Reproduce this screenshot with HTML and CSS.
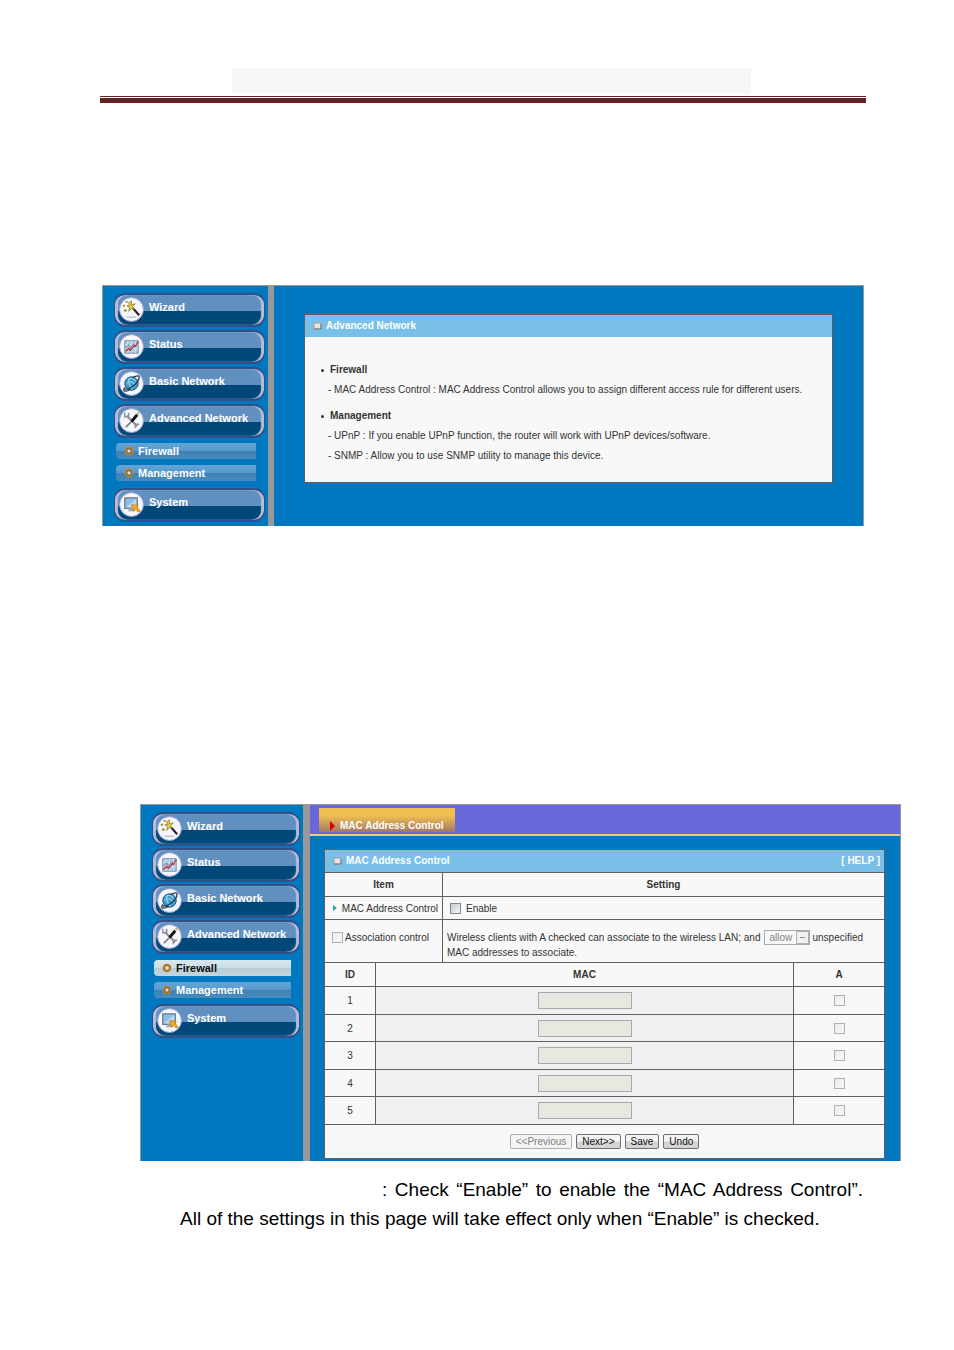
FILE: index.html
```html
<!DOCTYPE html>
<html lang="en">
<head>
  <meta charset="UTF-8">
  <title>MAC Address Control</title>
  <link rel="stylesheet" href="styles.css">
</head>
<body>

  <!-- icons shared by both menus -->
  <svg class="sprite" aria-hidden="true">
    <symbol id="wizard" viewBox="0 0 24 24">
      <path d="M7 20h10" stroke="#aaa" stroke-width="1"/>
      <path d="M12 9l8 9" stroke="#222" stroke-width="2.2"/>
      <path d="M12 9l2 2" stroke="#e8d870" stroke-width="2"/>
      <path d="M12 3l0 4 4-1-3 3 2 3-3-1-3 3 1-4-3-2 3 0-1-3z" fill="#e6cf3c" stroke="#6d5c16" stroke-width=".6"/>
      <path d="M3 7h2v2H3zM4 12h3v2H4zM6 3h2v2H6z" fill="#a8851a"/>
    </symbol>
    <symbol id="status" viewBox="0 0 24 24">
      <path d="M5 6h14v13H5z" fill="#a9cdea" stroke="#7186a0"/>
      <path d="M8 6v13M12 6v13M16 6v13M5 10h14M5 14h14" stroke="#d7e8f5" stroke-width=".7"/>
      <path d="M6 14l3-4 2 4 3-5 2 3" fill="none" stroke="#6d7c91"/>
      <path d="M6 17l3-3 2 2 4-5 1 1 3-5" fill="none" stroke="#c22f32" stroke-width="1.4"/>
    </symbol>
    <symbol id="basic" viewBox="0 0 24 24">
      <circle cx="12" cy="12" r="7" fill="#3f9ccc" stroke="#154f78"/>
      <path d="M8 8c3-3 7-1 8 2M7 12c3-3 7-2 9 2M10 6c-2 5 0 9 3 12" fill="none" stroke="#9bd8ec" stroke-width="1.1"/>
      <path d="M5 16c-3 5 1 5 6 2M19 8c3-5-1-5-6-2M5 17C7 20 17 14 20 7" fill="none" stroke="#26384c" stroke-width="1.3"/>
    </symbol>
    <symbol id="advanced" viewBox="0 0 24 24">
      <path d="M7 7l11 11" stroke="#8d9197" stroke-width="2.2"/>
      <path d="M5 4v4h4V4M16 20v-4h4" fill="none" stroke="#8d9197" stroke-width="1.6"/>
      <path d="M6 19l6-6" stroke="#777" stroke-width="1.6"/>
      <path d="M12 13l6-7" stroke="#151515" stroke-width="3"/>
      <path d="M18 5l2-1" stroke="#d6a32c" stroke-width="2"/>
    </symbol>
    <symbol id="system" viewBox="0 0 24 24">
      <path d="M5 5h13v11H5z" fill="#8dbce6" stroke="#69758b" stroke-width="1.3"/>
      <path d="M6 15L17 6v9z" fill="#b9d8f2"/>
      <path d="M8 19h8l-1-3h-5z" fill="#a3a7b0"/>
      <path d="M12 12l7 1-1 2 3 4-2 1-3-3-2 2z" fill="#f1ad1f" stroke="#ba7812" stroke-width=".7"/>
    </symbol>
    <symbol id="gear" viewBox="0 0 10 10">
      <circle cx="5" cy="5" r="3" fill="none" stroke="#a46a1a" stroke-width="2"/>
      <circle cx="5" cy="5" r="4" fill="none" stroke="#d69d3b" stroke-width="1" stroke-dasharray="2 1"/>
      <circle cx="5" cy="5" r="1.6" fill="#d7dfe6"/>
    </symbol>
    <symbol id="chip" viewBox="0 0 10 10">
      <path d="M2 2h7v6H2z" fill="#d8d8d8" stroke="#a5a5a5"/>
      <path d="M2 8h7V3" fill="none" stroke="#80756c"/>
      <path d="M3 3h5v4H3z" fill="#e6e6e6"/>
    </symbol>
  </svg>

  <div class="doc">

    <header class="doc-header">
      <div class="title-box"></div>
    </header>

    <section class="shot shot-overview">
      <nav class="menu">
        <a class="menu-item" href="#"><svg><use href="#wizard"/></svg><span>Wizard</span></a>
        <a class="menu-item" href="#"><svg><use href="#status"/></svg><span>Status</span></a>
        <a class="menu-item" href="#"><svg><use href="#basic"/></svg><span>Basic Network</span></a>
        <a class="menu-item" href="#"><svg><use href="#advanced"/></svg><span>Advanced Network</span></a>
        <div class="submenu">
          <a class="sub-item" href="#"><svg><use href="#gear"/></svg>Firewall</a>
          <a class="sub-item" href="#"><svg><use href="#gear"/></svg>Management</a>
        </div>
        <a class="menu-item" href="#"><svg><use href="#system"/></svg><span>System</span></a>
      </nav>
      <div class="main">
        <div class="box">
          <h2 class="box-title"><svg><use href="#chip"/></svg>Advanced Network</h2>
          <div class="box-body">
            <h3>Firewall</h3>
            <p>- MAC Address Control : MAC Address Control allows you to assign different access rule for different users.</p>
            <h3>Management</h3>
            <p>- UPnP : If you enable UPnP function, the router will work with UPnP devices/software.</p>
            <p>- SNMP : Allow you to use SNMP utility to manage this device.</p>
          </div>
        </div>
      </div>
    </section>

    <section class="shot shot-mac">
      <nav class="menu">
        <a class="menu-item" href="#"><svg><use href="#wizard"/></svg><span>Wizard</span></a>
        <a class="menu-item" href="#"><svg><use href="#status"/></svg><span>Status</span></a>
        <a class="menu-item" href="#"><svg><use href="#basic"/></svg><span>Basic Network</span></a>
        <a class="menu-item" href="#"><svg><use href="#advanced"/></svg><span>Advanced Network</span></a>
        <div class="submenu">
          <a class="sub-item active" href="#"><svg><use href="#gear"/></svg>Firewall</a>
          <a class="sub-item" href="#"><svg><use href="#gear"/></svg>Management</a>
        </div>
        <a class="menu-item" href="#"><svg><use href="#system"/></svg><span>System</span></a>
      </nav>
      <div class="main">
        <div class="tabs">
          <a class="tab" href="#"><svg viewBox="0 0 5 10"><path d="M0 0l5 5-5 5z" fill="#d80000"/></svg>MAC Address Control</a>
        </div>
        <form class="settings">
          <table>
            <colgroup>
              <col class="col-id">
              <col class="col-item">
              <col>
              <col class="col-a">
            </colgroup>
            <tbody>
              <tr class="row-title">
                <th colspan="4">
                  <div class="box-title"><svg><use href="#chip"/></svg>MAC Address Control<a class="help" href="#">[ HELP ]</a></div>
                </th>
              </tr>
              <tr class="row-head">
                <th colspan="2">Item</th>
                <th colspan="2">Setting</th>
              </tr>
              <tr class="row-enable">
                <td colspan="2"><div class="line name"><svg viewBox="0 0 4 6"><path d="M0 0l4 3-4 3z" fill="#2a9fae"/></svg>MAC Address Control</div></td>
                <td colspan="2"><label class="line"><input type="checkbox" class="check lit">Enable</label></td>
              </tr>
              <tr class="row-assoc">
                <td colspan="2"><label class="line assoc"><input type="checkbox" class="check" disabled>Association control</label></td>
                <td colspan="2">
                  <div class="policy">
                    <label for="policy">Wireless clients with A checked can associate to the wireless LAN; and</label>
                    <span class="picker"><select id="policy" disabled><option>allow</option></select></span>
                    <span>unspecified</span>
                  </div>
                  <div>MAC addresses to associate.</div>
                </td>
              </tr>
              <tr class="row-head">
                <th>ID</th>
                <th colspan="2">MAC</th>
                <th>A</th>
              </tr>
              <tr class="row-mac">
                <td>1</td>
                <td colspan="2" class="mac"><input type="text" aria-label="MAC 1" disabled></td>
                <td><input type="checkbox" class="check" aria-label="A 1" disabled></td>
              </tr>
              <tr class="row-mac">
                <td>2</td>
                <td colspan="2" class="mac"><input type="text" aria-label="MAC 2" disabled></td>
                <td><input type="checkbox" class="check" aria-label="A 2" disabled></td>
              </tr>
              <tr class="row-mac">
                <td>3</td>
                <td colspan="2" class="mac"><input type="text" aria-label="MAC 3" disabled></td>
                <td><input type="checkbox" class="check" aria-label="A 3" disabled></td>
              </tr>
              <tr class="row-mac">
                <td>4</td>
                <td colspan="2" class="mac"><input type="text" aria-label="MAC 4" disabled></td>
                <td><input type="checkbox" class="check" aria-label="A 4" disabled></td>
              </tr>
              <tr class="row-mac">
                <td>5</td>
                <td colspan="2" class="mac"><input type="text" aria-label="MAC 5" disabled></td>
                <td><input type="checkbox" class="check" aria-label="A 5" disabled></td>
              </tr>
              <tr class="row-buttons">
                <td colspan="4">
                  <div class="buttons">
                    <button type="button" disabled>&lt;&lt;Previous</button>
                    <button type="button">Next&gt;&gt;</button>
                    <button type="button">Save</button>
                    <button type="button">Undo</button>
                  </div>
                </td>
              </tr>
            </tbody>
          </table>
        </form>
      </div>
    </section>

    <p class="note">: Check “Enable” to enable the “MAC Address Control”. All of the settings in this page will take effect only when “Enable” is checked.</p>

  </div>

</body>
</html>
```
FILE: styles.css
```css
* {
  box-sizing: border-box;
  margin: 0;
  padding: 0;
}

body {
  background-color: #fff;
  font-family: "Liberation Sans", Arial, sans-serif;
  font-size: 10px;
  color: #333;
}

a {
  text-decoration: none;
}

.sprite {
  display: none;
}

.doc {
  padding: 68px 53px 60px 100px;
}

/* thin line over a thick one */
.doc-header {
  margin-right: 35px;
  padding: 0 115px 0 132px;
}

.doc-header::after {
  content: "";
  display: block;
  height: 1px;
  margin: 2px -115px 0 -132px;
  border-top: 1px solid #622423;
  border-bottom: 5px solid #622423;
}

.title-box {
  height: 26px;
  background-color: #f7f7f7;
}

/* router screens */
.shot {
  display: flex;
  border: 1px solid #999;
  border-bottom: 0;
  background-color: #0078c0;
}

.shot-overview {
  margin: 182px 37px 0 2px;
}

.shot-mac {
  margin: 278px 0 0 40px;
}

.main {
  flex: 1;
  min-width: 0;
}

/* side menu */
.menu {
  display: flex;
  flex-direction: column;
  gap: 3px;
  width: 171px;
  padding: 7px 3px 3px 11px;
  border-right: 6px solid #999;
}

.shot-mac .menu {
  gap: 2px;
  width: 169px;
  border-right-width: 7px;
}

.menu-item {
  display: flex;
  gap: 5px;
  height: 34px;
  padding: 2px 4px;
  border: 2px solid #344e88;
  border-width: 2px 1px;
  border-radius: 11px;
  background: linear-gradient(#6090c0 16px, #004878 16px);
  box-shadow: inset 3px 0 1px #b4bedb, inset -3px 0 1px #b4bedb;
  color: #fff;
  font-size: 11px;
  font-weight: bold;
  line-height: 20px;
  white-space: nowrap;
}

.menu-item svg {
  flex: none;
  width: 25px;
  height: 25px;
  border: 1px solid #8d98ce;
  border-radius: 50%;
  background-color: #f5f6fc;
}

.submenu {
  display: flex;
  flex-direction: column;
  gap: 6px;
  padding: 2px 9px 4px 2px;
}

.shot-mac .submenu {
  padding: 4px 9px 4px 2px;
}

.sub-item {
  display: flex;
  align-items: center;
  gap: 4px;
  height: 16px;
  padding-left: 8px;
  border-radius: 4px 0 0 4px;
  background: linear-gradient(#64a4d6, #5898cc 50%, #3d82b4 50%, #488cbc);
  color: #fff;
  font-size: 11px;
  font-weight: bold;
}

.sub-item.active {
  background: linear-gradient(#d8e8f0, #cbdde6 50%, #b8ccd6 50%, #c4d6de);
  color: #111;
}

.sub-item svg {
  width: 10px;
  height: 10px;
}

/* overview box */
.box {
  margin: 28px 30px 43px;
  border: 1px solid #606060;
  background-color: #f8f8f8;
}

.box-title {
  display: flex;
  align-items: center;
  gap: 4px;
  height: 22px;
  padding: 0 4px 0 7px;
  background-color: #78c0e8;
  color: #fff;
  font-size: 10px;
  font-weight: bold;
  line-height: 12px;
}

.box-title svg {
  width: 10px;
  height: 10px;
}

.help {
  margin-left: auto;
  color: #fff;
}

.box-body {
  padding: 23px 16px 16px 23px;
  line-height: 20px;
}

.box-body h3 {
  display: flex;
  align-items: center;
  gap: 6px;
  margin-left: -7px;
  font-size: 10px;
}

.box-body h3::before {
  content: "";
  width: 3px;
  height: 3px;
  border-radius: 50%;
  background-color: #333;
}

.box-body p + h3 {
  margin-top: 6px;
}

/* tabs */
.tabs {
  display: flex;
  height: 31px;
  padding: 3px 9px 0;
  border-bottom: 2px solid #e8d080;
  background-color: #6868d8;
}

.tab {
  display: flex;
  align-items: flex-end;
  gap: 5px;
  height: 24px;
  padding: 0 11px;
  background: linear-gradient(#f2c050 30%, #a07868);
  color: #fff;
  font-size: 10px;
  font-weight: bold;
  line-height: 12px;
}

.tab svg {
  width: 5px;
  height: 10px;
  margin-bottom: 1px;
}

/* settings table */
.settings {
  padding: 13px 15px 2px 14px;
}

.settings table {
  width: 100%;
  table-layout: fixed;
  border-collapse: collapse;
  background-color: #f8f8f8;
}

.col-id {
  width: 51px;
}

.col-item {
  width: 67px;
}

.col-a {
  width: 91px;
}

.settings td,
.settings th {
  border: 1px solid #606060;
  text-align: center;
}

.settings .row-title th {
  border-bottom: 0;
}

.row-title {
  height: 22px;
}

.row-head {
  height: 24px;
}

.row-enable {
  height: 23px;
}

.row-assoc {
  height: 43px;
}

.row-mac {
  height: 28px;
}

.row-mac:nth-child(odd) {
  height: 27px;
}

.row-buttons {
  height: 34px;
}

.settings .row-enable td,
.settings .row-assoc td {
  padding: 0 4px;
  line-height: 15px;
  text-align: left;
}

.settings .row-assoc td {
  padding-top: 10px;
  vertical-align: top;
}

.settings .mac {
  background-color: #f0f0f0;
}

.line {
  display: flex;
  align-items: center;
  gap: 5px;
  padding-left: 3px;
  white-space: nowrap;
}

.name {
  padding-left: 4px;
}

.name svg {
  width: 4px;
  height: 6px;
}

.assoc {
  gap: 2px;
}

.check {
  appearance: none;
  width: 11px;
  height: 11px;
  border: 1px solid #b0b0b0;
  background: linear-gradient(135deg, #ececec, #f8f8f8);
  vertical-align: middle;
}

.check.lit {
  border-color: #7f8890;
  background: linear-gradient(135deg, #c4cacf, #f6f6f6);
}

.mac input {
  width: 94px;
  height: 17px;
  border: 1px solid #a8a8b0;
  background-color: #e8e8e0;
  vertical-align: middle;
}

.policy {
  display: flex;
  align-items: center;
  white-space: nowrap;
}

.picker {
  position: relative;
  display: flex;
  margin: 0 2px 0 4px;
}

/* drop-down arrow */
.picker::after {
  content: "";
  position: absolute;
  top: 1px;
  right: 1px;
  width: 11px;
  height: 11px;
  border: 1px solid #b0b0b0;
  background: linear-gradient(#909090, #909090) center / 5px 1px no-repeat #f0f0f0;
}

.picker select {
  appearance: none;
  width: 46px;
  height: 15px;
  padding-left: 4px;
  border: 1px solid #a8a8b0;
  background-color: #f8f8f8;
  color: #808080;
  font: inherit;
  line-height: 12px;
  opacity: 1;
}

.buttons {
  display: flex;
  justify-content: center;
  gap: 4px;
}

.buttons button {
  height: 15px;
  padding: 0 5px;
  border: 1px solid #707070;
  border-radius: 2px;
  background: linear-gradient(#f4f4f4 45%, #d4d4d4 55%);
  color: #111;
  font: inherit;
}

.buttons button:disabled {
  border-color: #b0b0b0;
  background: #f4f4f4;
  color: #808080;
}

/* text below the screens */
.note {
  margin: 14px 38px 0 80px;
  color: #000;
  font-size: 19px;
  line-height: 29px;
  text-align: justify;
  text-indent: 202px;
}
```
